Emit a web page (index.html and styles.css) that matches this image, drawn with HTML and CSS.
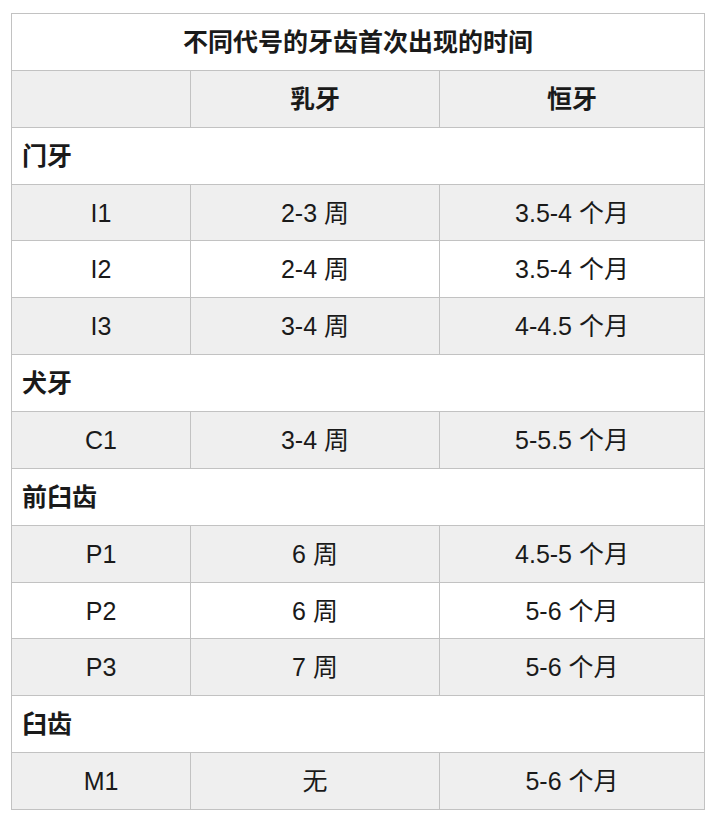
FILE: index.html
```html
<!DOCTYPE html>
<html lang="zh-CN">
<head>
<meta charset="utf-8">
<title>不同代号的牙齿首次出现的时间</title>
<link rel="stylesheet" href="styles.css">
</head>
<body>
<table class="teeth">
  <colgroup>
    <col class="c-code">
    <col class="c-milk">
    <col class="c-perm">
  </colgroup>
  <tr class="title"><td colspan="3">不同代号的牙齿首次出现的时间</td></tr>
  <tr class="head"><td></td><td>乳牙</td><td>恒牙</td></tr>
  <tr class="cat"><td colspan="3">门牙</td></tr>
  <tr><td>I1</td><td>2-3 周</td><td>3.5-4 个月</td></tr>
  <tr><td>I2</td><td>2-4 周</td><td>3.5-4 个月</td></tr>
  <tr><td>I3</td><td>3-4 周</td><td>4-4.5 个月</td></tr>
  <tr class="cat"><td colspan="3">犬牙</td></tr>
  <tr><td>C1</td><td>3-4 周</td><td>5-5.5 个月</td></tr>
  <tr class="cat"><td colspan="3">前臼齿</td></tr>
  <tr><td>P1</td><td>6 周</td><td>4.5-5 个月</td></tr>
  <tr><td>P2</td><td>6 周</td><td>5-6 个月</td></tr>
  <tr><td>P3</td><td>7 周</td><td>5-6 个月</td></tr>
  <tr class="cat"><td colspan="3">臼齿</td></tr>
  <tr><td>M1</td><td>无</td><td>5-6 个月</td></tr>
</table>
</body>
</html>
```
FILE: styles.css
```css
html, body {
  margin: 0;
  padding: 0;
  background: #ffffff;
}
body {
  padding: 13px 0 0 11px;
  font-family: "Liberation Sans", "Noto Sans CJK SC", sans-serif;
  color: #1a1a1a;
}
.teeth {
  border-collapse: collapse;
  width: 693px;
  table-layout: fixed;
  font-size: 25px;
  line-height: 30px;
}
.c-code { width: 179px; }
.c-milk { width: 249px; }
.c-perm { width: 265px; }
.teeth tr {
  height: 56.86px;
}
.teeth td {
  border: 1px solid #c2c2c2;
  padding: 0;
  text-align: center;
  vertical-align: middle;
  background: #ffffff;
}
.teeth tr:nth-child(even) td {
  background: #efefef;
}
.teeth .title td,
.teeth .head td {
  font-weight: bold;
}
.teeth .cat td {
  text-align: left;
  padding-left: 10px;
  font-weight: bold;
}
```
